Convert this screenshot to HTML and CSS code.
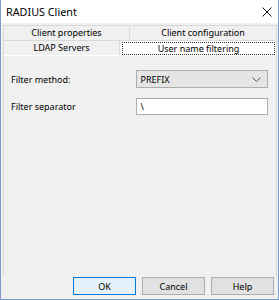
FILE: index.html
```html
<!DOCTYPE html>
<html>
<head>
<meta charset="utf-8">
<link rel="stylesheet" href="styles.css">
</head>
<body>
<div class="window">
  <div class="titlebar">
    <span class="title">RADIUS Client</span>
    <svg class="close" width="10" height="10" viewBox="0 0 10 10"><path d="M0.5 0.5L9.5 9.5M9.5 0.5L0.5 9.5" stroke="#111" stroke-width="1"/></svg>
  </div>
  <div class="body">
    <div class="tabs">
      <div class="tabrow row1">
        <div class="tab">Client properties</div>
        <div class="tab">Client configuration</div>
      </div>
      <div class="tabrow row2">
        <div class="tab">LDAP Servers</div>
        <div class="tab active"><span class="focus">User name filtering</span></div>
      </div>
    </div>
    <div class="pane">
      <div class="field">
        <span class="label">Filter method:</span>
        <div class="combo"><span>PREFIX</span>
          <svg class="chev" width="9" height="5" viewBox="0 0 9 5"><path d="M0.5 0.5L4.5 4.5L8.5 0.5" fill="none" stroke="#555" stroke-width="1"/></svg>
        </div>
      </div>
      <div class="field">
        <span class="label">Filter separator</span>
        <div class="input">\</div>
      </div>
    </div>
    <div class="buttons">
      <div class="btn default">OK</div>
      <div class="btn">Cancel</div>
      <div class="btn">Help</div>
    </div>
  </div>
</div>
</body>
</html>
```
FILE: styles.css
```css
html, body {
  margin: 0;
  padding: 0;
  background: #f0f0f0;
}
.window {
  width: 279px;
  height: 300px;
  box-sizing: border-box;
  border: 1px solid #7a9cc6;
  border-top: none;
  background: #f0f0f0;
  font-family: "Noto Sans", "Liberation Sans", sans-serif;
  font-size: 9px;
  color: #000;
  display: flex;
  flex-direction: column;
}
.titlebar {
  height: 23px;
  background: #fff;
  display: flex;
  align-items: center;
  justify-content: space-between;
  padding: 0 6px 0 5px;
}
.title {
  font-size: 10.8px;
}
.body {
  flex: 1;
  display: flex;
  flex-direction: column;
  padding: 2px 1px 0 2px;
}
.tabs {
  display: flex;
  flex-direction: column;
}
.tabrow {
  display: grid;
  height: 15px;
}
.row1 {
  grid-template-columns: 126px 1fr;
}
.row2 {
  grid-template-columns: 116px 1fr;
}
.tab {
  border: 1px solid #d9d9d9;
  border-right: none;
  border-bottom: none;
  background: #f0f0f0;
  display: flex;
  align-items: center;
  justify-content: center;
  line-height: 12px;
}
.tab:last-child {
  border-right: 1px solid #d9d9d9;
}
.tab.active {
  background: #fff;
  padding: 1px 1px 0 2px;
}
.focus {
  flex: 1;
  align-self: stretch;
  display: flex;
  align-items: center;
  justify-content: center;
  outline: 1px dotted #333;
  outline-offset: -1px;
}
.pane {
  border: 1px solid #d9d9d9;
  border-bottom: none;
  border-top-color: #fff;
  flex: 1;
  padding: 14px 8px 0 7px;
  display: flex;
  flex-direction: column;
  gap: 10px;
}
.field {
  display: flex;
  align-items: center;
}
.label {
  width: 127px;
}
.combo {
  width: 133px;
  height: 18px;
  box-sizing: border-box;
  border: 1px solid #adadad;
  background: #e5e5e5;
  display: flex;
  align-items: center;
  justify-content: space-between;
  padding: 0 6px 0 3px;
}
.input {
  width: 133px;
  height: 17px;
  box-sizing: border-box;
  border: 1px solid #adadad;
  background: #fff;
  display: flex;
  align-items: center;
  padding: 0 3px;
}
.buttons {
  display: flex;
  justify-content: flex-end;
  gap: 6px;
  padding: 0 3px 4px 0;
  background: #f0f0f0;
}
.btn {
  width: 63px;
  height: 18px;
  box-sizing: border-box;
  border: 1px solid #adadad;
  background: #e1e1e1;
  display: flex;
  align-items: center;
  justify-content: center;
}
.btn.default {
  border-color: #0078d7;
  background: #e5f1fb;
}
```
